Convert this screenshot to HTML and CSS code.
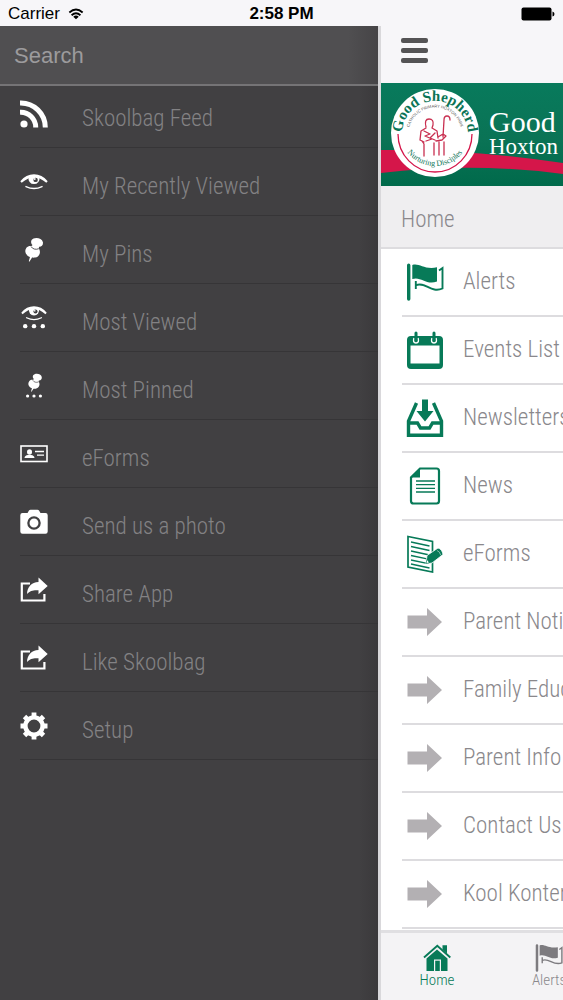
FILE: index.html
```html
<!DOCTYPE html>
<html lang="en">
<head>
<meta charset="utf-8">
<meta name="viewport" content="width=device-width, initial-scale=1">
<title>Skoolbag</title>
<link rel="stylesheet" href="styles.css">
</head>
<body>
<svg class="sprite" width="0" height="0" aria-hidden="true">
  <symbol id="eye" viewBox="0 0 28 16">
    <path d="M.3 7.200Q6 .3 14 .3T27.700 7.200L26.300 8.800Q20 3.200 14 3.200T1.700 8.800z" fill="currentColor"/>
    <path d="M8.700 3a5.500 5.600 0 1 0 10.600 0Q14 0 8.700 3z" fill="currentColor"/>
    <circle cx="15.600" cy="5.900" r="2.200" fill="#414042"/>
    <circle cx="14.800" cy="5" r=".9" fill="currentColor"/>
    <path d="M6 12.600Q14 16.500 22 12.600" fill="none" stroke="currentColor" stroke-width="1.400" stroke-linecap="round"/>
  </symbol>
  <symbol id="pin" viewBox="0 0 20 26">
    <path d="M7.500 3.200C9.500 0 18 .2 19.300 5.500c.4 3.300-1.800 5-4 4.700l-.3 1.600c2.800 4.500.3 9.100-3.900 9.600-1.100.2-2.200.2-3.100 0L5.200 25.700 4.600 25.300l1.200-4.500C1 19-.3 14.500 2.100 11.200c1.500-1.700 3.400-2 5.100-1.700l1.300-1.200C7 7 6.500 5 7.500 3.200z" fill="currentColor"/>
    <path d="M7 10c1.500 2.500 4.500 3.500 8 2.200" fill="none" stroke="#414042" stroke-width=".9"/>
  </symbol>
  <symbol id="dots" viewBox="0 0 20 4">
    <circle cx="2" cy="2" r="2" fill="currentColor"/><circle cx="10" cy="2" r="2" fill="currentColor"/><circle cx="18" cy="2" r="2" fill="currentColor"/>
  </symbol>
  <symbol id="share" viewBox="0 0 28 28">
    <path d="M10 7.500H1.800V24.500H24.400V18" fill="none" stroke="currentColor" stroke-width="2.200"/>
    <path d="M18.500 1.500 27.700 10l-9.200 8.200v-4C13 14 10.500 14.300 7 18c.2-7 4.500-11.700 11.500-12z" fill="currentColor"/>
  </symbol>
  <symbol id="flag" viewBox="0 0 38 38">
    <path d="M1 2.200a1.700 1.700 0 0 1 3.400 0V36a1.700 1.700 0 0 1-3.400 0z" fill="currentColor"/>
    <path d="M6.300 2C13-.5 18 7 31 4.300V18.500C20 22.500 15 13 6.300 16z" fill="currentColor"/>
    <path d="M33 7.500 36.500 5V25.500C25 30.500 19 18 9.800 22.300M9.800 18v8" fill="none" stroke="currentColor" stroke-width="1.900"/>
  </symbol>
  <symbol id="arrow" viewBox="0 0 38 38">
    <path d="M1.500 12.500H21V5L36 19 21 33V25.500H1.500z" fill="#b3b0b3"/>
  </symbol>
</svg>

<header class="status">
  <div class="status-left"><span>Carrier</span>
    <svg class="wifi" viewBox="0 0 18 13" aria-hidden="true"><path d="M1.500 4.800Q9-2 16.500 4.800M4 7.900Q9 3.300 14 7.900" fill="none" stroke="#000" stroke-width="2"/><path d="M9 12.500 5.900 9.500Q9 7 12.100 9.500z"/></svg>
  </div>
  <time class="clock">2:58 PM</time>
  <svg class="battery" viewBox="0 0 34 14" aria-hidden="true"><rect x=".5" y=".5" width="30" height="13" rx="2"/><path d="M31.500 4.500q2 .5 2 2.500t-2 2.500z"/></svg>
</header>

<div class="app">
  <aside class="drawer">
    <input class="search" type="search" placeholder="Search" aria-label="Search">
    <nav class="menu">
      <a class="menu-item" href="#"><svg class="menu-icon" viewBox="0 0 28 28"><circle cx="4" cy="24" r="3.600" fill="currentColor"/><path d="M0 12.200A15 15 0 0 1 15.700 27.500M0 3A24.500 24.500 0 0 1 25.300 27.500" fill="none" stroke="currentColor" stroke-width="5"/></svg><span>Skoolbag Feed</span></a>
      <a class="menu-item" href="#"><svg class="menu-icon" viewBox="0 0 28 28"><use href="#eye" x="0" y="6" width="28" height="16"/></svg><span>My Recently Viewed</span></a>
      <a class="menu-item" href="#"><svg class="menu-icon" viewBox="0 0 28 28"><use href="#pin" x="4" y="1" width="20" height="25"/></svg><span>My Pins</span></a>
      <a class="menu-item" href="#"><svg class="menu-icon" viewBox="0 0 28 28"><use href="#eye" x="1" y="2" width="26" height="15"/><use href="#dots" x="3" y="20" width="22" height="4.500"/></svg><span>Most Viewed</span></a>
      <a class="menu-item" href="#"><svg class="menu-icon" viewBox="0 0 28 28"><use href="#pin" x="7" y="1" width="16" height="19"/><use href="#dots" x="6" y="22" width="16" height="4"/></svg><span>Most Pinned</span></a>
      <a class="menu-item" href="#"><svg class="menu-icon" viewBox="0 0 28 28"><rect x="1" y="6" width="26" height="15.500" fill="none" stroke="currentColor" stroke-width="1.600"/><ellipse cx="9.500" cy="12" rx="2.500" ry="2.800" fill="currentColor"/><path d="M4.500 18q.3-2.600 3.500-3h3q3.200.4 3.500 3z" fill="currentColor"/><path d="M15 11.500h9M17 15.200h7" stroke="currentColor" stroke-width="1.300"/></svg><span>eForms</span></a>
      <a class="menu-item" href="#"><svg class="menu-icon" viewBox="0 0 28 28"><path d="M7.500 5 9 2.500Q9.500 1.800 10.500 1.800h7q1 0 1.500.7L20.500 5H25.500A2.200 2.200 0 0 1 27.700 7.200V23.500A2.200 2.200 0 0 1 25.500 25.700H2.500A2.200 2.200 0 0 1 .3 23.500V7.200A2.200 2.200 0 0 1 2.500 5z" fill="currentColor"/><circle cx="14" cy="15" r="5.600" fill="none" stroke="#414042" stroke-width="2.300"/></svg><span>Send us a photo</span></a>
      <a class="menu-item" href="#"><svg class="menu-icon"><use href="#share"/></svg><span>Share App</span></a>
      <a class="menu-item" href="#"><svg class="menu-icon"><use href="#share"/></svg><span>Like Skoolbag</span></a>
      <a class="menu-item" href="#"><svg class="menu-icon" viewBox="0 0 28 28"><circle cx="14" cy="14" r="8.600" fill="none" stroke="currentColor" stroke-width="4.400"/><path d="M14 .5v5M14 22.500v5M.5 14h5M22.500 14h5M4.500 4.500 8 8M20 20l3.500 3.500M4.500 23.500 8 20M20 8l3.500-3.500" stroke="currentColor" stroke-width="4.800"/></svg><span>Setup</span></a>
    </nav>
  </aside>

  <main class="page">
    <div class="toolbar">
      <button class="burger" type="button" aria-label="Menu"><span></span><span></span><span></span></button>
    </div>
    <div class="banner">
      <svg class="banner-art" viewBox="0 0 182 103" preserveAspectRatio="xMinYMin slice" aria-hidden="true">
        <defs>
          <linearGradient id="bg" x1="0" y1="0" x2="0" y2="1"><stop offset="0" stop-color="#087a5c"/><stop offset=".55" stop-color="#0a7355"/><stop offset="1" stop-color="#006a4b"/></linearGradient>
          <path id="arc-top" d="M21 51A33 33 0 0 1 87 51"/>
          <path id="arc-mid" d="M27.500 51A26.500 26.500 0 0 1 80.500 51"/>
          <path id="arc-low" d="M19 48A35 35 0 0 0 89 48"/>
        </defs>
        <rect width="182" height="103" fill="url(#bg)"/>
        <path d="M0 67Q90 66 182 80V91Q90 79 0 90z" fill="#d5164a"/>
        <circle cx="54" cy="50" r="44" fill="#fff"/>
        <path d="M17 51A37 38 0 0 0 91 51" fill="none" stroke="#d5164a" stroke-width="1.300"/>
        <text class="crest-name"><textPath href="#arc-top" startOffset="50%" text-anchor="middle">Good Shepherd</textPath></text>
        <text class="crest-school"><textPath href="#arc-mid" startOffset="50%" text-anchor="middle">CATHOLIC PRIMARY HOXTON PARK</textPath></text>
        <text class="crest-motto"><textPath href="#arc-low" startOffset="50%" text-anchor="middle">Nurturing Disciples</textPath></text>
        <g fill="none" stroke="#c92f50" stroke-width="1.300" stroke-linecap="round" stroke-linejoin="round">
          <path d="M45 44q-2-8 3-8 5 0 4 6l-1 3M45 45l-5 3-1 9 4 2M51 45l5 3 1 7M43 48l6 3-5 2 7 3-6 2M41 58l2 3v12M53 60v12M57 54l5-3 3 2-4 4-6 1M54 50l-5 5 5 2M58 59v13M63 59v13M62 54l1-17q0-4 3-4 3 0 3 4"/>
        </g>
      </svg>
      <h1 class="school"><span class="school-name">Good</span><span class="school-place">Hoxton</span></h1>
    </div>
    <h2 class="section">Home</h2>
    <nav class="list">
      <a class="row" href="#"><svg class="row-icon"><use href="#flag"/></svg><span>Alerts</span></a>
      <a class="row" href="#"><svg class="row-icon" viewBox="0 0 38 38"><path d="M5 5H33Q37 5 37 9V34Q37 38 33 38H5Q1 38 1 34V9Q1 5 5 5zM4.500 14.500V32.500H33.500V14.500z" fill="currentColor" fill-rule="evenodd"/><path d="M8 7q-1.500 5 2 5t2-5M26 7q-1.500 5 2 5t2-5" fill="none" stroke="#fff" stroke-width="1.500"/><path d="M10 2v7M28 2v7" stroke="currentColor" stroke-width="3" stroke-linecap="round"/></svg><span>Events List</span></a>
      <a class="row" href="#"><svg class="row-icon" viewBox="0 0 38 38"><path d="M10.500 4 2.500 22V36.200H35.500V22L27.500 4M2 24H11.500l3 5h9l3-5H36" fill="none" stroke="currentColor" stroke-width="3.400"/><path d="M16 .5h6V12h5.500L19 22.500 10.500 12H16z" fill="currentColor"/></svg><span>Newsletters</span></a>
      <a class="row" href="#"><svg class="row-icon" viewBox="0 0 38 38"><path d="M14 1.500H30.500Q33 1.500 33 4V34Q33 36.500 30.500 36.500H7.500Q5 36.500 5 34V10.500z" fill="none" stroke="currentColor" stroke-width="2.200"/><path d="M14 1.500V10.500H5z" fill="currentColor"/><path d="M10 14H29M10 17.700H29M10 21.400H29M10 25H29" stroke="currentColor" stroke-width="1.300"/></svg><span>News</span></a>
      <a class="row" href="#"><svg class="row-icon" viewBox="0 0 38 38"><path d="M2 1.500 26.500 6.500V37L2 32z" fill="none" stroke="currentColor" stroke-width="1.700"/><path d="M5 7l18.500 4M5 11.500l18.500 4M5 16l18.500 4M5 20.500l16 3.400M5 25l16 3.400M5 29l18.500 4" stroke="currentColor" stroke-width="1.400"/><path d="M21 20.500 32 13q4 1 5 6.500L26 28l-6 1z" fill="currentColor" stroke="#fff" stroke-width=".8"/><path d="M20.800 24.500l-.6 4 3-.5q-.5-2.300-2.400-3.500z" fill="#fff" stroke="currentColor" stroke-width=".6"/><path d="M31 15.500q3 1 3.700 4.700" fill="none" stroke="#fff" stroke-width=".5"/></svg><span>eForms</span></a>
      <a class="row" href="#"><svg class="row-icon"><use href="#arrow"/></svg><span>Parent Notices</span></a>
      <a class="row" href="#"><svg class="row-icon"><use href="#arrow"/></svg><span>Family Education</span></a>
      <a class="row" href="#"><svg class="row-icon"><use href="#arrow"/></svg><span>Parent Info</span></a>
      <a class="row" href="#"><svg class="row-icon"><use href="#arrow"/></svg><span>Contact Us</span></a>
      <a class="row" href="#"><svg class="row-icon"><use href="#arrow"/></svg><span>Kool Kontent</span></a>
    </nav>
    <nav class="tabs">
      <a class="tab active" href="#"><svg class="tab-icon" viewBox="0 0 28 28"><path d="M3.500 14.500 14 5.500 24.500 14.500V27H18V15.500H11V27H3.500z" fill="currentColor"/><path d="M12.200 27V16.700h4.600V27z" fill="currentColor"/><path d="M1 13.500 14.300 1.800 27.300 13.500" fill="none" stroke="currentColor" stroke-width="1.900"/><path d="M19.500 1.200H24V9.500L19.500 5.500z" fill="currentColor"/></svg><span>Home</span></a>
      <a class="tab" href="#"><svg class="tab-icon" viewBox="0 0 38 38"><use href="#flag"/></svg><span>Alerts</span></a>
    </nav>
  </main>
</div>
</body>
</html>
```
FILE: styles.css
```css
* { box-sizing: border-box; }

body {
  margin: 0;
  min-height: 100vh;
  display: flex;
  flex-direction: column;
  background: #f7f6f9;
  font-family: "Roboto Condensed", Roboto, sans-serif;
  font-weight: 300;
  font-size: 23px;
  line-height: 28px;
}

a { color: inherit; text-decoration: none; }
svg { display: block; flex: none; }
.sprite { position: absolute; }

.status {
  display: grid;
  grid-template-columns: 1fr auto 1fr;
  align-items: center;
  height: 26px;
  padding: 2px 8px 0;
  color: #000;
  font: 400 17px/24px "Liberation Sans", Arial, sans-serif;
}
.status-left { display: flex; align-items: center; gap: 8px; }
.wifi { width: 16px; height: 12px; }
.clock { font-weight: 700; }
.battery { width: 34px; height: 14px; justify-self: end; }

.app { flex: 1; display: flex; overflow: hidden; }

.drawer {
  flex: 0 0 378px;
  background: linear-gradient(to right, transparent 95%, rgba(40, 36, 40, .25)), #414042;
}
.search {
  display: block;
  width: 100%;
  height: 60px;
  padding: 2px 14px 0;
  border: 0;
  border-bottom: 2px solid #757476;
  border-radius: 0;
  appearance: none;
  background: linear-gradient(to right, transparent 92%, rgba(40, 36, 40, .25)), #504f51;
  color: #9c9b9d;
  font: 400 22px/28px "Liberation Sans", Arial, sans-serif;
}
.search::placeholder { color: #9c9b9d; opacity: 1; }

.menu { padding-left: 20px; }
.menu-item {
  display: flex;
  align-items: flex-end;
  gap: 34px;
  height: 68px;
  padding-bottom: 14px;
  border-bottom: 1px solid #363537;
  color: #838284;
  white-space: nowrap;
}
.menu-item:first-child { height: 62px; }
.menu-icon { width: 28px; height: 28px; margin-bottom: 5px; color: #fff; }

.page {
  flex: 1;
  min-width: 0;
  display: flex;
  flex-direction: column;
  overflow: hidden;
  border-left: 3px solid #d9d8db;
  background: #fff;
  color: #8a888c;
}
.toolbar { flex: none; height: 57px; padding: 12px 20px; background: #f7f6f9; }
.burger {
  display: flex;
  flex-direction: column;
  gap: 5px;
  padding: 0;
  border: 0;
  background: none;
}
.burger span { width: 27px; height: 5px; border-radius: 2px; background: #545355; }

.banner { flex: none; display: grid; height: 103px; overflow: hidden; }
.banner-art { grid-area: 1 / 1; width: 100%; height: 100%; }
.school {
  grid-area: 1 / 1;
  z-index: 1;
  display: flex;
  flex-direction: column;
  margin: 0;
  padding: 25px 0 0 108px;
  color: #fff;
  font: 400 23px/22px "Liberation Serif", "Times New Roman", serif;
}
.school-name { font-size: 30px; line-height: 28px; }
.crest-name { font: 700 15px "Liberation Serif", serif; fill: #0b7456; }
.crest-school { font: 400 4px "Liberation Sans", sans-serif; fill: #555; }
.crest-motto { font: 400 8px "Liberation Serif", serif; fill: #0b7456; }

.section {
  flex: none;
  height: 63px;
  margin: 0;
  padding: 20px 20px 0;
  border-bottom: 2px solid #dddcdf;
  background: #efeef0;
  font-size: 23px;
  font-weight: 300;
}
.list { padding-left: 21px; }
.row {
  display: flex;
  align-items: center;
  gap: 19px;
  height: 68px;
  padding-left: 4px;
  border-bottom: 2px solid #dddcdf;
  white-space: nowrap;
}
.row-icon { width: 38px; height: 38px; color: #077a58; }

.tabs {
  flex: 1;
  display: flex;
  min-height: 70px;
  margin-top: 1px;
  border-top: 3px solid #e0dfe2;
  background: #f4f3f5;
  font-size: 15px;
  line-height: 16px;
}
.tab {
  flex: 0 0 112px;
  display: flex;
  flex-direction: column;
  align-items: center;
  padding-top: 11px;
}
.tab-icon { width: 28px; height: 28px; color: #7d7b7f; }
.active, .active .tab-icon { color: #077a58; }
```
